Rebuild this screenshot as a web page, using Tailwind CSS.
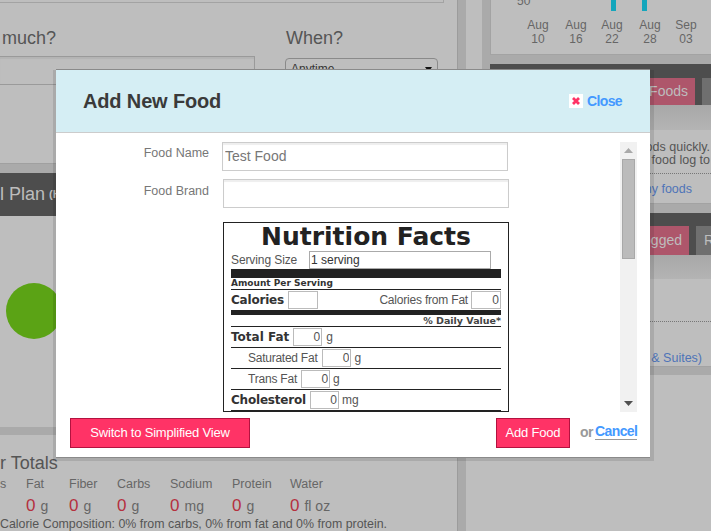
<!DOCTYPE html>
<html lang="en">
<head>
    <meta charset="UTF-8">
    <title>Add New Food</title>
    <script src="https://cdn.jsdelivr.net/npm/@tailwindcss/browser@4"></script>
</head>
<body class="bg-[#bebebe] font-['Liberation_Sans',Arial,sans-serif] overflow-hidden">
<div class="relative w-[711px] h-[531px] overflow-hidden">

    <!-- Page behind the dialog -->
    <div class="flex h-full items-start">
        <!-- Left column -->
        <div class="w-[457px] shrink-0 flex flex-col">
            <div class="h-[3px] shrink-0 w-[444px] border-b border-r border-[#a3a3a3]"></div>
            <div class="flex shrink-0 w-[444px] pt-[24px] h-[53px] whitespace-nowrap text-[18px] leading-[22px] text-[#555]">
                <div class="w-[285px] pl-[2px]">much?</div>
                <div class="ml-[1px]">When?</div>
            </div>
            <div class="flex shrink-0 h-[107px]">
                <div class="w-[255px] h-[29px] border border-[#9a9a9a] border-l-0 shadow-[inset_0_2px_1px_#b4b4b4]"></div>
                <div class="w-[153px] h-[20px] ml-[30px] mt-[2px] border border-[#8a8a8a] rounded-sm flex justify-between pl-[5px] pr-[5px] pt-[1px] text-[12px] leading-[18px] text-[#333]">
                    <span>Anytime</span>
                    <svg class="mt-[7px]" width="7" height="5" viewBox="0 0 7 5"><path d="M0 0 H7 L3.5 5 Z" fill="#111"/></svg>
                </div>
            </div>
            <div class="h-[10px] shrink-0 bg-[#aaaaaa] border-t border-[#a0a0a0]"></div>
            <div class="h-[43px] shrink-0 w-[444px] bg-[#4d4d4d] text-[#bdbdbd] text-[18px] leading-[43px] flex whitespace-nowrap">
                <span>l Plan</span>
                <span class="text-[11px] font-bold ml-[4px]">(Help)</span>
            </div>
            <div class="h-[211px] shrink-0 flex items-center pb-[22px]">
                <div class="w-[56px] h-[56px] ml-[6px] rounded-full bg-[#5ba315]"></div>
            </div>
            <div class="h-[8px] shrink-0 bg-[#aaaaaa]"></div>
            <div class="shrink-0 text-[18px] leading-[22px] text-[#555] mt-[17px] whitespace-nowrap">r Totals</div>
            <div class="flex shrink-0 text-[12.5px] text-[#666] mt-[2px] whitespace-nowrap">
                <div class="w-[26px]"><p class="leading-[16px]">s</p></div>
                <div class="w-[43px]"><p class="leading-[16px]">Fat</p><p class="mt-[4px] leading-[20px]"><span class="text-[17px] text-[#b5303f]">0</span><span class="text-[14px] ml-[5px]">g</span></p></div>
                <div class="w-[48px]"><p class="leading-[16px]">Fiber</p><p class="mt-[4px] leading-[20px]"><span class="text-[17px] text-[#b5303f]">0</span><span class="text-[14px] ml-[5px]">g</span></p></div>
                <div class="w-[53px]"><p class="leading-[16px]">Carbs</p><p class="mt-[4px] leading-[20px]"><span class="text-[17px] text-[#b5303f]">0</span><span class="text-[14px] ml-[5px]">g</span></p></div>
                <div class="w-[62px]"><p class="leading-[16px]">Sodium</p><p class="mt-[4px] leading-[20px]"><span class="text-[17px] text-[#b5303f]">0</span><span class="text-[14px] ml-[5px]">mg</span></p></div>
                <div class="w-[58px]"><p class="leading-[16px]">Protein</p><p class="mt-[4px] leading-[20px]"><span class="text-[17px] text-[#b5303f]">0</span><span class="text-[14px] ml-[5px]">g</span></p></div>
                <div><p class="leading-[16px]">Water</p><p class="mt-[4px] leading-[20px]"><span class="text-[17px] text-[#b5303f]">0</span><span class="text-[14px] ml-[5px]">fl oz</span></p></div>
            </div>
            <p class="shrink-0 text-[12.4px] leading-[14px] text-[#555] whitespace-nowrap">Calorie Composition: 0% from carbs, 0% from fat and 0% from protein.</p>
        </div>

        <!-- Gutter -->
        <div class="w-[9px] h-full shrink-0 bg-[#aaaaaa] border-l border-[#9c9c9c]"></div>
        <div class="w-[16px] shrink-0"></div>
        <div class="w-[8px] h-[375px] shrink-0 bg-[#aaaaaa]"></div>

        <!-- Right column -->
        <div class="flex-1 min-w-0 flex flex-col text-[12.5px] text-[#555] whitespace-nowrap">
            <div class="h-[55px] shrink-0 border-b border-l border-[#a3a3a3] text-center leading-[14px] text-[#666] text-[12px]">
                <div class="flex h-[11px] overflow-hidden pl-[26px]">
                    <span class="-mt-[6px] w-[94px] text-left">50</span>
                    <div class="w-[5px] h-[11px] bg-[#14a6bc]"></div>
                    <div class="w-[5px] h-[11px] ml-[26px] bg-[#14a6bc]"></div>
                </div>
                <div class="flex pt-[7px] pl-[29px]">
                    <div class="w-[36px]">Aug<br>10</div>
                    <div class="w-[36px] ml-[2px]">Aug<br>16</div>
                    <div class="w-[36px]">Aug<br>22</div>
                    <div class="w-[36px] ml-[2px]">Aug<br>28</div>
                    <div class="w-[36px]">Sep<br>03</div>
                </div>
            </div>
            <div class="h-[9px] shrink-0 bg-[#aaaaaa]"></div>
            <div class="h-[41px] shrink-0 bg-[#4d4d4d] flex items-end pl-[135px] gap-[7px]">
                <div class="h-[27px] w-[70px] shrink-0 pr-[7px] text-right bg-[#ae566b] text-[#bdbdbd] text-[14px] leading-[27px]">Foods</div>
                <div class="h-[27px] w-[30px] shrink-0 bg-[#6f6f6f]"></div>
            </div>
            <div class="h-[25px] shrink-0 bg-gradient-to-b from-[#a8a8a8] to-[#b4b4b4]"></div>
            <div class="h-[44px] shrink-0 w-[221px] pr-[1px] pt-[11px] text-right text-[12.5px] leading-[13px] border-b border-dotted border-[#777]">
                <p>foods quickly.</p>
                <p>your food log to</p>
            </div>
            <div class="h-[29px] shrink-0 w-[202px] pt-[6px] text-right text-[#4e74b8] text-[12.5px]">all my foods</div>
            <div class="h-[10px] shrink-0 bg-[#aaaaaa] border-t border-[#a3a3a3]"></div>
            <div class="h-[42px] shrink-0 bg-[#4d4d4d] flex items-end pl-[129px] gap-[7px]">
                <div class="h-[29px] w-[70px] shrink-0 pr-[7px] text-right bg-[#ae566b] text-[#bdbdbd] text-[14px] leading-[29px]">Logged</div>
                <div class="h-[29px] w-[30px] shrink-0 pl-[8px] bg-[#6f6f6f] text-[#bdbdbd] text-[14px] leading-[29px]">R</div>
            </div>
            <div class="h-[24px] shrink-0 bg-gradient-to-b from-[#a8a8a8] to-[#b4b4b4]"></div>
            <div class="h-[43px] shrink-0 w-[221px] border-b border-dotted border-[#777]"></div>
            <div class="h-[44px] shrink-0 w-[212px] pt-[27px] text-right text-[#4e74b8] text-[12.5px]">(Hotels &amp; Suites)</div>
            <div class="h-[9px] shrink-0 bg-[#aaaaaa] border-t border-[#a3a3a3]"></div>
        </div>
    </div>

    <!-- Add New Food dialog, with its translucent frame -->
    <div class="absolute left-[53px] top-[70px] pl-[3px] pr-[4px] pb-[4px] bg-black/10">
        <div class="w-[594px] h-[387px] bg-white flex flex-col shadow-[0_-1px_0_#8a8a8a,0_1px_0_#8a8a8a]">
            <div class="h-[63px] shrink-0 bg-[#d5eef4] border-b border-[#cccccc] flex items-center justify-between pl-[27px] pr-[28px]">
                <h2 class="text-[20px] font-bold text-[#3a3a3a] tracking-[-0.15px]">Add New Food</h2>
                <div class="flex items-center gap-[4px]">
                    <span class="w-[14px] h-[14px] bg-white flex items-center justify-center">
                        <svg width="10" height="10" viewBox="0 0 10 10"><path d="M2 2 L8 8 M8 2 L2 8" stroke="#ff3366" stroke-width="2.8"/></svg>
                    </span>
                    <span class="text-[14px] font-bold tracking-[-0.6px] text-[#4499ff]">Close</span>
                </div>
            </div>

            <div class="flex h-[270px] mt-[9px] shrink-0 overflow-hidden">
                <div class="w-[564px] shrink-0 overflow-hidden">
                    <div class="flex h-[37px]">
                        <label class="w-[153px] text-right text-[12.5px] text-[#777] pt-[3px] leading-[16px]">Food Name</label>
                        <input class="ml-[13px] w-[286px] h-[29px] border border-[#cccccc] shadow-[inset_0_2px_1px_#eeeeee] px-[2px] pb-[1px] text-[14px] text-[#777]" value="Test Food">
                    </div>
                    <div class="flex h-[43px]">
                        <label class="w-[153px] text-right text-[12.5px] text-[#777] pt-[4px] leading-[16px]">Food Brand</label>
                        <input class="ml-[14px] w-[286px] h-[29px] border border-[#cccccc] shadow-[inset_0_2px_1px_#eeeeee] px-[2px] text-[14px] text-[#777]">
                    </div>

                    <!-- Nutrition label -->
                    <div class="ml-[167px] w-[286px] border border-[#222] px-[7px] text-[12px] text-[#555]">
                        <h3 class="text-center font-['DejaVu_Sans',sans-serif] font-bold text-[25px] leading-[27px] text-[#222]">Nutrition Facts</h3>
                        <div class="flex items-center h-[19px]">
                            <span class="w-[78px] tracking-[-0.1px]">Serving Size</span>
                            <input class="w-[182px] h-[18px] border border-[#aaa] px-[1px] text-[12px] text-[#333]" value="1 serving">
                        </div>
                        <div class="h-[9px] bg-[#222]"></div>
                        <div class="font-['DejaVu_Sans',sans-serif] font-bold text-[9px] leading-[11px] h-[12px] text-[#333] border-b border-[#222]">Amount Per Serving</div>
                        <div class="flex items-center h-[20px] justify-between">
                            <div class="flex items-center gap-[4px]">
                                <span class="font-['DejaVu_Sans',sans-serif] font-bold text-[12px] tracking-[-0.2px] text-[#333]">Calories</span>
                                <input class="w-[30px] h-[18px] border border-[#bbb]">
                            </div>
                            <div class="flex items-center gap-[3px]">
                                <span class="tracking-[-0.2px]">Calories from Fat</span>
                                <input class="w-[30px] h-[18px] border border-[#bbb] text-right px-[1px] text-[12px] text-[#555]" value="0">
                            </div>
                        </div>
                        <div class="h-[5px] bg-[#222]"></div>
                        <div class="font-['DejaVu_Sans',sans-serif] font-bold text-[9.5px] leading-[11px] h-[12px] text-right text-[#444] border-b border-[#222]">% Daily Value*</div>
                        <div class="flex items-center h-[21px] border-b border-[#222]">
                            <span class="font-['DejaVu_Sans',sans-serif] font-bold text-[12px] text-[#333]">Total Fat</span>
                            <input class="ml-[4px] w-[29px] h-[18px] border border-[#bbb] text-right px-[1px] text-[12px] text-[#555]" value="0">
                            <span class="ml-[4px]">g</span>
                        </div>
                        <div class="flex items-center h-[21px] border-b border-[#222] pl-[17px]">
                            <span class="tracking-[-0.25px]">Saturated Fat</span>
                            <input class="ml-[5px] w-[29px] h-[18px] border border-[#bbb] text-right px-[1px] text-[12px] text-[#555]" value="0">
                            <span class="ml-[3px]">g</span>
                        </div>
                        <div class="flex items-center h-[21px] border-b border-[#222] pl-[17px]">
                            <span class="tracking-[-0.2px]">Trans Fat</span>
                            <input class="ml-[4px] w-[29px] h-[18px] border border-[#bbb] text-right px-[1px] text-[12px] text-[#555]" value="0">
                            <span class="ml-[3px]">g</span>
                        </div>
                        <div class="flex items-center h-[21px] border-b border-[#222]">
                            <span class="font-['DejaVu_Sans',sans-serif] font-bold text-[12px] tracking-[-0.2px] text-[#333]">Cholesterol</span>
                            <input class="ml-[4px] w-[29px] h-[18px] border border-[#bbb] text-right px-[1px] text-[12px] text-[#555]" value="0">
                            <span class="ml-[3px]">mg</span>
                        </div>
                    </div>
                </div>

                <!-- Scrollbar -->
                <div class="w-[17px] shrink-0 bg-[#f1f1f1] flex flex-col items-center">
                    <svg class="mt-[6px] shrink-0" width="9" height="5" viewBox="0 0 9 5"><path d="M4.5 0 L9 5 H0 Z" fill="#a9a9a9"/></svg>
                    <div class="mt-[6px] w-[13px] h-[100px] bg-[#bbbbbb] border border-[#a8a8a8]"></div>
                    <svg class="mt-auto mb-[6px] shrink-0" width="9" height="5" viewBox="0 0 9 5"><path d="M0 0 H9 L4.5 5 Z" fill="#505050"/></svg>
                </div>
            </div>

            <div class="flex items-center pl-[14px] mt-[6px]">
                <button class="w-[180px] h-[30px] bg-[#ff3366] border border-[#b3123f] text-white text-[13px] tracking-[-0.2px]">Switch to Simplified View</button>
                <button class="ml-[246px] w-[74px] h-[30px] bg-[#ff3366] border border-[#b3123f] text-white text-[13px] tracking-[-0.2px]">Add Food</button>
                <span class="ml-[10px] text-[14px] font-bold tracking-[-0.5px] text-[#999] mb-[2px]">or</span>
                <span class="ml-[2px] text-[14px] font-bold tracking-[-0.6px] text-[#4499ff] border-b border-[#999] leading-[15px] mb-[3px]">Cancel</span>
            </div>
        </div>
    </div>
</div>
</body>
</html>
